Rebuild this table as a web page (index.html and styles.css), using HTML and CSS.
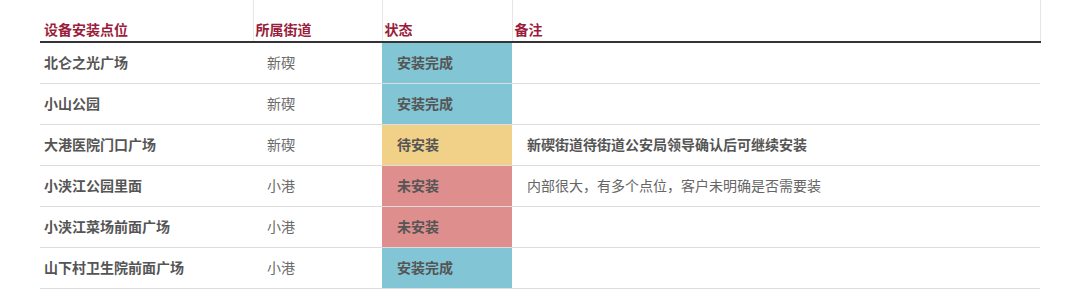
FILE: index.html
```html
<!DOCTYPE html>
<html lang="zh">
<head>
<meta charset="utf-8">
<link rel="stylesheet" href="styles.css">
</head>
<body>
<table class="grid">
  <colgroup>
    <col class="c-site">
    <col class="c-street">
    <col class="c-status">
    <col class="c-note">
  </colgroup>
  <thead>
    <tr>
      <th class="h-site">设备安装点位</th>
      <th>所属街道</th>
      <th>状态</th>
      <th>备注</th>
    </tr>
  </thead>
  <tbody>
    <tr>
      <td class="site">北仑之光广场</td>
      <td class="street">新碶</td>
      <td class="status done">安装完成</td>
      <td class="note"></td>
    </tr>
    <tr>
      <td class="site">小山公园</td>
      <td class="street">新碶</td>
      <td class="status done">安装完成</td>
      <td class="note"></td>
    </tr>
    <tr>
      <td class="site">大港医院门口广场</td>
      <td class="street">新碶</td>
      <td class="status wait">待安装</td>
      <td class="note strong">新碶街道待街道公安局领导确认后可继续安装</td>
    </tr>
    <tr>
      <td class="site">小浃江公园里面</td>
      <td class="street">小港</td>
      <td class="status none">未安装</td>
      <td class="note">内部很大，有多个点位，客户未明确是否需要装</td>
    </tr>
    <tr>
      <td class="site">小浃江菜场前面广场</td>
      <td class="street">小港</td>
      <td class="status none">未安装</td>
      <td class="note"></td>
    </tr>
    <tr>
      <td class="site">山下村卫生院前面广场</td>
      <td class="street">小港</td>
      <td class="status done">安装完成</td>
      <td class="note"></td>
    </tr>
  </tbody>
</table>
</body>
</html>
```
FILE: styles.css
```css
html, body {
  margin: 0;
  padding: 0;
  background: #ffffff;
}
body {
  font-family: "Noto Sans CJK SC", "Noto Sans", sans-serif;
  font-size: 14px;
  color: #555555;
}
.grid {
  margin-left: 40px;
  width: 1000px;
  border-collapse: collapse;
  table-layout: fixed;
}
.c-site { width: 213px; }
.c-street { width: 129px; }
.c-status { width: 130px; }
.c-note { width: 528px; }

.grid th {
  height: 38px;
  padding: 0 0 3px 2px;
  vertical-align: bottom;
  text-align: left;
  font-size: 14px;
  font-weight: bold;
  color: #9a1d3b;
  border-left: 1px solid #e6e6e6;
  border-right: 1px solid #e6e6e6;
  border-bottom: 2px solid #333333;
  line-height: 18px;
}
.grid th.h-site {
  border-left: none;
  padding-left: 4px;
}
.grid td {
  height: 37px;
  padding: 0 0 3px 14px;
  border-bottom: 1px solid #dddddd;
  vertical-align: middle;
  line-height: 18px;
  font-size: 14px;
}
.grid td.site {
  padding-left: 4px;
  font-weight: bold;
  color: #555555;
}
.grid td.street {
  color: #6a6a6a;
}
.grid td.status {
  padding-left: 15px;
  font-weight: bold;
  color: #555555;
}
.status.done { background: #82c6d6; }
.status.wait { background: #f1d088; }
.status.none { background: #de8e8d; }
.grid td.note {
  padding-left: 15px;
  color: #666666;
}
.grid td.note.strong {
  font-weight: bold;
  color: #555555;
}
```
